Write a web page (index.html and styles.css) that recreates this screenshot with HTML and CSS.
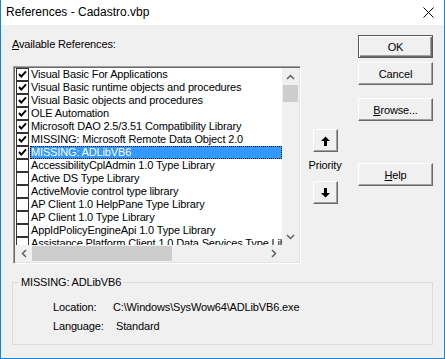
FILE: index.html
```html
<!DOCTYPE html>
<html>
<head>
<meta charset="utf-8">
<link rel="stylesheet" href="styles.css">
</head>
<body>
<div class="window">
  <div class="titlebar">
    <span class="title">References - Cadastro.vbp</span>
    <svg class="close" width="11" height="11" viewBox="0 0 11 11"><path d="M0.5 0.5 L10.5 10.5 M10.5 0.5 L0.5 10.5" stroke="#000" stroke-width="1" fill="none"/></svg>
  </div>
  <div class="content">
    <div class="top">
      <div class="leftcol">
        <div class="label"><u>A</u>vailable References:</div>
        <div class="listbox">
          <div class="listmain">
            <div class="items">
              <div class="row"><span class="cb on"></span><span class="txt">Visual Basic For Applications</span></div>
              <div class="row"><span class="cb on"></span><span class="txt">Visual Basic runtime objects and procedures</span></div>
              <div class="row"><span class="cb on"></span><span class="txt">Visual Basic objects and procedures</span></div>
              <div class="row"><span class="cb on"></span><span class="txt">OLE Automation</span></div>
              <div class="row"><span class="cb on"></span><span class="txt">Microsoft DAO 2.5/3.51 Compatibility Library</span></div>
              <div class="row"><span class="cb on"></span><span class="txt">MISSING: Microsoft Remote Data Object 2.0</span></div>
              <div class="row"><span class="cb on"></span><span class="txt sel">MISSING: ADLibVB6</span></div>
              <div class="row"><span class="cb"></span><span class="txt">AccessibilityCplAdmin 1.0 Type Library</span></div>
              <div class="row"><span class="cb"></span><span class="txt">Active DS Type Library</span></div>
              <div class="row"><span class="cb"></span><span class="txt">ActiveMovie control type library</span></div>
              <div class="row"><span class="cb"></span><span class="txt">AP Client 1.0 HelpPane Type Library</span></div>
              <div class="row"><span class="cb"></span><span class="txt">AP Client 1.0 Type Library</span></div>
              <div class="row"><span class="cb"></span><span class="txt">AppIdPolicyEngineApi 1.0 Type Library</span></div>
              <div class="row"><span class="cb"></span><span class="txt">Assistance Platform Client 1.0 Data Services Type Library</span></div>
            </div>
            <div class="vscroll">
              <div class="sbtn"><svg width="9" height="6" viewBox="0 0 9 6"><path d="M1 5 L4.5 1.5 L8 5" stroke="#606060" stroke-width="1.5" fill="none"/></svg></div>
              <div class="vthumb"></div>
              <div class="vtrack"></div>
              <div class="sbtn"><svg width="9" height="6" viewBox="0 0 9 6"><path d="M1 1 L4.5 4.5 L8 1" stroke="#606060" stroke-width="1.5" fill="none"/></svg></div>
            </div>
          </div>
          <div class="hrow">
            <div class="hscroll">
              <div class="sbtn"><svg width="6" height="9" viewBox="0 0 6 9"><path d="M5 1 L1.5 4.5 L5 8" stroke="#606060" stroke-width="1.5" fill="none"/></svg></div>
              <div class="hthumb"></div>
              <div class="htrack"></div>
              <div class="sbtn"><svg width="6" height="9" viewBox="0 0 6 9"><path d="M1 1 L4.5 4.5 L1 8" stroke="#606060" stroke-width="1.5" fill="none"/></svg></div>
            </div>
            <div class="corner"></div>
          </div>
        </div>
      </div>
      <div class="prio">
        <div class="abtn"><svg width="9" height="10" viewBox="0 0 9 10"><path d="M4.5 0.5 L9 5 L6 5 L6 10 L3 10 L3 5 L0 5 Z" fill="#000"/></svg></div>
        <div class="plabel">Priority</div>
        <div class="abtn"><svg width="9" height="10" viewBox="0 0 9 10"><path d="M4.5 9.5 L9 5 L6 5 L6 0 L3 0 L3 5 L0 5 Z" fill="#000"/></svg></div>
      </div>
      <div class="buttons">
        <div class="btn def">OK</div>
        <div class="btn">Cancel</div>
        <div class="btn gap"><u>B</u>rowse...</div>
        <div class="btn gap2"><u>H</u>elp</div>
      </div>
    </div>
    <fieldset class="group">
      <legend>MISSING: ADLibVB6</legend>
      <div class="info">
        <div class="irow"><span class="ilabel">Location:</span><span>C:\Windows\SysWow64\ADLibVB6.exe</span></div>
        <div class="irow"><span class="ilabel">Language:</span><span class="lang">Standard</span></div>
      </div>
    </fieldset>
  </div>
</div>
</body>
</html>
```

FILE: styles.css
```css
* { box-sizing: border-box; }
html, body { margin: 0; padding: 0; }
body {
  width: 445px;
  height: 359px;
  overflow: hidden;
  font-family: "Liberation Sans", Arial, sans-serif;
  font-size: 11px;
  letter-spacing: -0.15px;
  color: #000;
}
.window {
  width: 445px;
  height: 359px;
  border: 1px solid #1883d7;
  border-top: none;
  background: #f0f0f0;
  display: flex;
  flex-direction: column;
}
.titlebar {
  height: 25px;
  background: #fff;
  display: flex;
  align-items: center;
  justify-content: space-between;
  padding: 0 10px 1px 5px;
}
.title { font-size: 12px; letter-spacing: 0; }
.close { display: block; }
.content {
  flex: 1;
  padding: 0 11px 0 11px;
}
.top {
  display: flex;
  align-items: flex-start;
}
.leftcol {
  width: 290px;
}
.label {
  margin-top: 13px;
  height: 13px;
  line-height: 13px;
}
.listbox {
  margin-top: 15px;
  margin-left: 1px;
  width: 288px;
  height: 198px;
  background: #fff;
  border: 1px solid;
  border-color: #a0a0a0 #fff #fff #a0a0a0;
  box-shadow: inset 1px 1px #696969, inset -1px -1px #e3e3e3;
  padding: 1px;
  display: flex;
  flex-direction: column;
}
.listmain {
  flex: 1;
  display: flex;
  min-height: 0;
}
.items {
  flex: 1;
  overflow: hidden;
  min-width: 0;
}
.row {
  height: 13px;
  display: flex;
  align-items: center;
  white-space: nowrap;
}
.cb {
  flex: none;
  width: 13px;
  height: 13px;
  margin-left: 1px;
  border: 1px solid #333;
  background: #fff;
}
.cb.on {
  background: #fff url("data:image/svg+xml;utf8,<svg xmlns='http://www.w3.org/2000/svg' width='11' height='11'><path d='M2 5 L4.3 7.6 L9 2.4' stroke='black' stroke-width='2' fill='none'/></svg>") no-repeat center;
}
.txt {
  height: 13px;
  line-height: 13px;
  padding-left: 1px;
  margin-left: 1px;
}
.txt.sel {
  flex: 1;
  background: #3399ff;
  color: #fff;
  outline: 1px dotted #000;
  outline-offset: -1px;
}
.vscroll {
  width: 17px;
  flex: none;
  background: #f0f0f0;
  display: flex;
  flex-direction: column;
}
.sbtn {
  width: 17px;
  height: 17px;
  flex: none;
  display: flex;
  align-items: center;
  justify-content: center;
}
.sbtn svg { display: block; }
.vthumb {
  height: 17px;
  margin: 0 1px;
  background: #cdcdcd;
}
.vtrack { flex: 1; }
.hrow {
  height: 17px;
  display: flex;
}
.hscroll {
  flex: 1;
  display: flex;
  background: #f0f0f0;
}
.hthumb {
  width: 140px;
  margin: 1px 0;
  background: #cdcdcd;
}
.htrack { flex: 1; }
.corner {
  width: 17px;
  background: #f0f0f0;
}
.prio {
  width: 26px;
  margin-left: 10px;
  margin-top: 104px;
  display: flex;
  flex-direction: column;
  align-items: center;
}
.abtn {
  width: 25px;
  height: 23px;
  background: #f0f0f0;
  border: 1px solid;
  border-color: #fff #696969 #696969 #fff;
  box-shadow: inset -1px -1px #a0a0a0;
  display: flex;
  align-items: center;
  justify-content: center;
}
.abtn svg { display: block; }
.plabel {
  height: 13px;
  line-height: 13px;
  margin: 7px 0 9px;
  white-space: nowrap;
}
.buttons {
  margin-left: 20px;
  margin-top: 10px;
  width: 75px;
  display: flex;
  flex-direction: column;
}
.btn {
  width: 75px;
  height: 23px;
  margin-bottom: 4px;
  background: #f0f0f0;
  border: 1px solid;
  border-color: #fff #696969 #696969 #fff;
  box-shadow: inset -1px -1px #a0a0a0;
  display: flex;
  align-items: center;
  justify-content: center;
}
.btn.def {
  border: 1px solid #5a5a5a;
  box-shadow: inset 1px 1px #fff, inset -1px -1px #696969, inset -2px -2px #a0a0a0;
}
.btn.gap { margin-top: 9px; }
.btn.gap2 { margin-top: 38px; }
.group {
  margin: 12px 0 0 0;
  width: 421px;
  height: 69px;
  border: 1px solid #dcdcdc;
  padding: 0;
}
.group legend {
  margin-left: 6px;
  padding: 0 2px;
  line-height: 13px;
  font-size: 11px;
}
.info {
  padding: 12px 0 0 40px;
}
.irow {
  height: 13px;
  line-height: 13px;
  margin-bottom: 6px;
  display: flex;
  white-space: nowrap;
}
.ilabel { width: 60px; }
.lang { margin-left: 3px; }
```
